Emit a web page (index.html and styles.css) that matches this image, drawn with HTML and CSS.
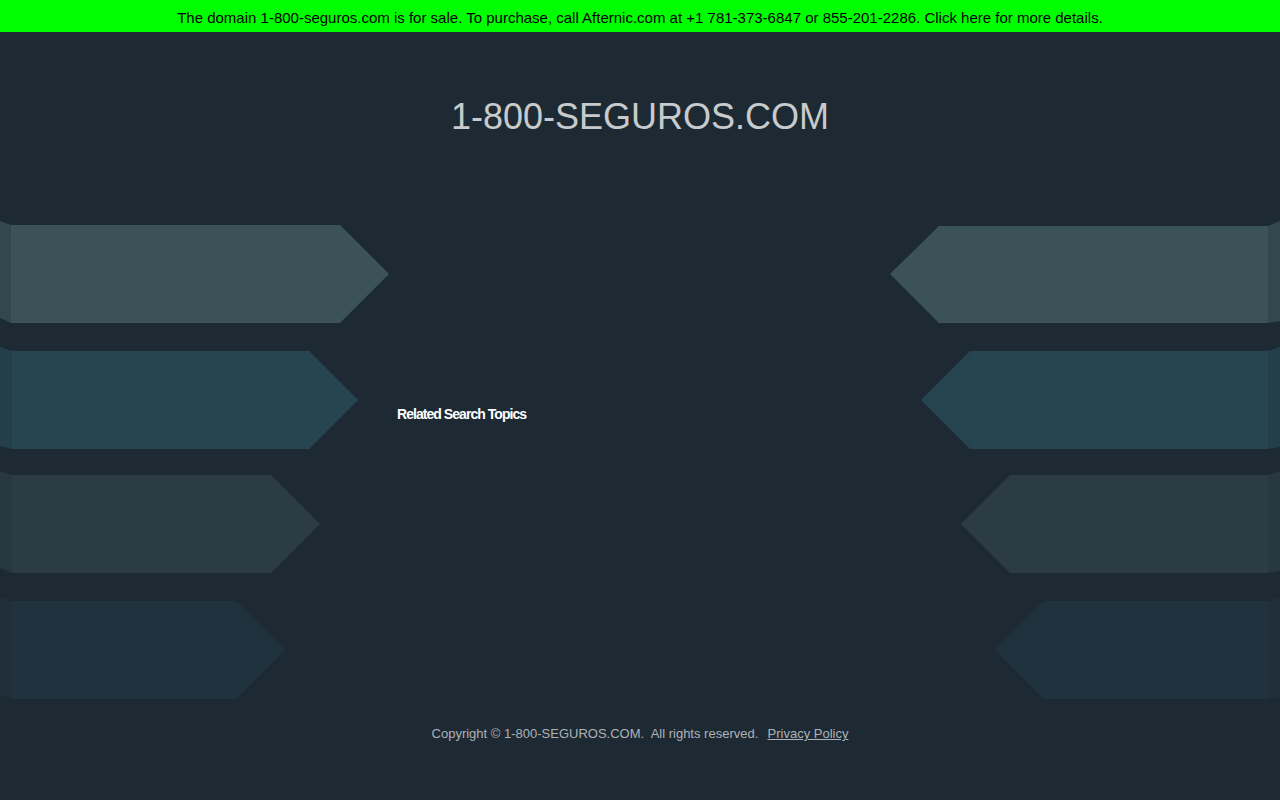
FILE: index.html
```html
<!DOCTYPE html>
<html lang="en">
<head>
<meta charset="utf-8">
<title>1-800-SEGUROS.COM</title>
<link rel="stylesheet" href="styles.css">
</head>
<body>
<div class="banner">The domain 1-800-seguros.com is for sale. To purchase, call Afternic.com at +1 781-373-6847 or 855-201-2286. Click here for more details.</div>
<header class="header"><h1 class="title">1-800-SEGUROS.COM</h1></header>
<main class="stage">
  <div class="arrows arrows-left">
    <svg class="arrow" width="390" height="104" viewBox="0 0 390 104">
      <polygon class="c1-tab" points="0,0 11,4 11,102 0,97"/>
      <polygon class="c1" points="11,4 340,4 389,53 340,102 11,102"/>
      <line class="c1-seam" x1="340.5" y1="4" x2="340.5" y2="102"/>
    </svg>
    <svg class="arrow shift" width="390" height="104" viewBox="0 0 390 104">
      <polygon class="c2-tab" points="0,0 12,4 12,102 0,99"/>
      <polygon class="c2" points="12,4 309,4 358,53 309,102 12,102"/>
      <line class="c2-seam" x1="309.5" y1="4" x2="309.5" y2="102"/>
    </svg>
    <svg class="arrow" width="390" height="104" viewBox="0 0 390 104">
      <polygon class="c3-tab" points="0,0 12,4 12,102 0,97"/>
      <polygon class="c3" points="12,4 271,4 320,53 271,102 12,102"/>
      <line class="c3-seam" x1="271.5" y1="4" x2="271.5" y2="102"/>
    </svg>
    <svg class="arrow shift" width="390" height="104" viewBox="0 0 390 104">
      <polygon class="c4-tab" points="0,0 12,4 12,102 0,98"/>
      <polygon class="c4" points="12,4 236,4 285,53 236,102 12,102"/>
      <line class="c4-seam" x1="236.5" y1="4" x2="236.5" y2="102"/>
    </svg>
  </div>
  <div class="center">
    <h2 class="topics">Related Search Topics</h2>
  </div>
  <div class="arrows arrows-right">
    <svg class="arrow flip" width="390" height="104" viewBox="0 0 390 104">
      <polygon class="c1-tab" points="0,0 12,5 12,102 0,100"/>
      <polygon class="c1" points="12,5 341,5 390,53 341,102 12,102"/>
      <line class="c1-seam" x1="341.5" y1="5" x2="341.5" y2="102"/>
    </svg>
    <svg class="arrow flip shift" width="390" height="104" viewBox="0 0 390 104">
      <polygon class="c2-tab" points="0,0 12,4 12,102 0,100"/>
      <polygon class="c2" points="12,4 310,4 359,53 310,102 12,102"/>
      <line class="c2-seam" x1="310.5" y1="4" x2="310.5" y2="102"/>
    </svg>
    <svg class="arrow flip" width="390" height="104" viewBox="0 0 390 104">
      <polygon class="c3-tab" points="0,0 12,4 12,102 0,100"/>
      <polygon class="c3" points="12,4 270,4 319,53 270,102 12,102"/>
      <line class="c3-seam" x1="270.5" y1="4" x2="270.5" y2="102"/>
    </svg>
    <svg class="arrow flip shift" width="390" height="104" viewBox="0 0 390 104">
      <polygon class="c4-tab" points="0,0 12,4 12,102 0,100"/>
      <polygon class="c4" points="12,4 236,4 285,53 236,102 12,102"/>
      <line class="c4-seam" x1="236.5" y1="4" x2="236.5" y2="102"/>
    </svg>
  </div>
</main>
<footer class="footer">Copyright &copy; 1-800-SEGUROS.COM.&nbsp; All rights reserved.&nbsp; <a class="privacy" href="#">Privacy Policy</a></footer>
</body>
</html>
```

FILE: styles.css
```css
html, body {
  margin: 0;
  padding: 0;
}

body {
  background: #1d2a34;
  font-family: "Liberation Sans", Arial, sans-serif;
  width: 1280px;
  height: 800px;
  overflow: hidden;
}

.banner {
  box-sizing: border-box;
  height: 32px;
  padding-top: 3px;
  line-height: 29px;
  background: #00ff00;
  color: #000;
  font-size: 15px;
  text-align: center;
  white-space: nowrap;
}

.header {
  padding-top: 65px;
  text-align: center;
}

.title {
  margin: 0;
  font-size: 36px;
  line-height: 40px;
  font-weight: normal;
  color: #c9cacb;
}

.stage {
  display: flex;
  justify-content: space-between;
  margin-top: 84px;
}

.arrows {
  display: flex;
  flex-direction: column;
  gap: 21px;
  width: 390px;
}

.arrow {
  display: block;
}

.shift {
  margin-top: 1px;
  margin-bottom: -1px;
}

.flip {
  transform: scaleX(-1);
}

.c1 { fill: #3b5358; }
.c1-tab { fill: #33484e; }
.c1-seam { stroke: #395055; stroke-width: 1; }

.c2 { fill: #274452; }
.c2-tab { fill: #243e4a; }
.c2-seam { stroke: #26424f; stroke-width: 1; }

.c3 { fill: #2b3d43; }
.c3-tab { fill: #28383f; }
.c3-seam { stroke: #2a3b41; stroke-width: 1; }

.c4 { fill: #20323e; }
.c4-tab { fill: #212f3a; }
.c4-seam { stroke: #1f303c; stroke-width: 1; }

.center {
  flex: 1;
  padding-top: 185px;
  padding-left: 7px;
}

.topics {
  margin: 0;
  font-size: 14px;
  line-height: 16px;
  font-weight: bold;
  letter-spacing: -0.95px;
  color: #ffffff;
}

.footer {
  margin-top: 26px;
  text-align: center;
  font-size: 13px;
  line-height: 16px;
  color: #aeb2b6;
}

.privacy {
  color: #aeb2b6;
  text-decoration: underline;
  margin-left: 2px;
}
```
